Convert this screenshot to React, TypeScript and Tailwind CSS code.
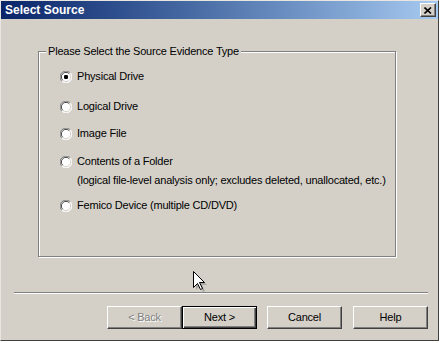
import React from 'react';

const font = { fontFamily: '"Liberation Sans", Arial, sans-serif' };

const Radio = ({ checked }: { checked?: boolean }) => (
  <svg width="12" height="12" viewBox="0 0 12 12" className="shrink-0">
    <circle cx="6" cy="6" r="5.5" fill="#fff" />
    {/* sunken edge: dark top-left, light bottom-right */}
    <path d="M10.2 1.8 A5.5 5.5 0 0 0 1.8 10.2" fill="none" stroke="#808080" strokeWidth="1" />
    <path d="M9.3 2.7 A4.5 4.5 0 0 0 2.7 9.3" fill="none" stroke="#404040" strokeWidth="1" />
    <path d="M1.8 10.2 A5.5 5.5 0 0 0 10.2 1.8" fill="none" stroke="#ffffff" strokeWidth="1" />
    <path d="M2.7 9.3 A4.5 4.5 0 0 0 9.3 2.7" fill="none" stroke="#d4d0c8" strokeWidth="1" />
    {checked && <rect x="4" y="4" width="4" height="4" rx="1.2" fill="#000" />}
  </svg>
);

const Option = ({ label, checked, className }: { label: string; checked?: boolean; className: string }) => (
  <div className={`flex items-center h-[13px] ${className}`}>
    <Radio checked={checked} />
    <span className="ml-[5px] text-[11px] tracking-[-0.2px] leading-none text-black whitespace-nowrap">{label}</span>
  </div>
);

const Button = ({ children, disabled, primary, className = '' }: { children: React.ReactNode; disabled?: boolean; primary?: boolean; className?: string }) => (
  <button
    className={`w-[75px] h-[23px] flex items-center justify-center text-[11px] tracking-[-0.2px] bg-[#d4d0c8] ${
      primary
        ? 'border border-black shadow-[inset_1px_1px_0_#fff,inset_-1px_-1px_0_#404040,inset_-2px_-2px_0_#808080]'
        : 'border border-t-white border-l-white border-r-[#404040] border-b-[#404040] shadow-[inset_-1px_-1px_0_#808080]'
    } ${disabled ? 'text-[#808080] [text-shadow:1px_1px_0_#fff]' : 'text-black'} ${className}`}
  >
    {children}
  </button>
);

const App = () => {
  return (
    <div className="relative w-[442px] h-[343px] bg-white overflow-hidden" style={font}>
      {/* Окно диалога */}
      <div className="w-[439px] h-[341px] bg-[#d4d0c8] border-l border-t border-[#e8e6e1] border-r border-b border-r-[#404040] border-b-[#404040] flex flex-col">
        {/* Заголовок */}
        <div className="h-[18px] bg-gradient-to-r from-[#0a246a] to-[#a6caf0] flex items-center justify-between pl-[4px] pr-[2px]">
          <span className="text-white font-bold text-[12px] leading-none">Select Source</span>
          <div className="w-[16px] h-[14px] bg-[#d4d0c8] border border-t-white border-l-white border-r-[#404040] border-b-[#404040] shadow-[inset_-1px_-1px_0_#808080] flex items-center justify-center">
            <svg width="8" height="7" viewBox="0 0 8 7">
              <path d="M0.5 0.5 L7 6.5 M7 0.5 L0.5 6.5" stroke="#000" strokeWidth="1.6" />
            </svg>
          </div>
        </div>

        {/* Группа выбора */}
        <div className="relative ml-[37px] mt-[32px] w-[358px] h-[206px] border border-[#808080] shadow-[inset_1px_1px_0_#fff,1px_1px_0_#fff]">
          <span className="absolute left-[7px] -top-[7px] px-[2px] bg-[#d4d0c8] text-[11px] tracking-[-0.2px] leading-[13px] text-black whitespace-nowrap">
            Please Select the Source Evidence Type
          </span>
          <div className="flex flex-col pl-[21px]">
            <Option className="mt-[18px]" label="Physical Drive" checked />
            <Option className="mt-[17px]" label="Logical Drive" />
            <Option className="mt-[14px]" label="Image File" />
            <Option className="mt-[15px]" label="Contents of a Folder" />
            <div className="mt-[6px] ml-[17px] h-[13px] text-[11px] tracking-[-0.2px] leading-[13px] text-black whitespace-nowrap">
              (logical file-level analysis only; excludes deleted, unallocated, etc.)
            </div>
            <Option className="mt-[12px]" label="Femico Device (multiple CD/DVD)" />
          </div>
        </div>

        {/* Разделитель */}
        <div className="ml-[13px] mt-[35px] w-[414px] h-[2px] border-t border-[#808080] border-b border-b-white" />

        {/* Кнопки */}
        <div className="flex mt-[12px] ml-[106px]">
          <Button disabled>&lt; Back</Button>
          <Button primary>Next &gt;</Button>
          <Button className="ml-[10px]">Cancel</Button>
          <Button className="ml-[11px]">Help</Button>
        </div>
      </div>

      {/* Курсор мыши */}
      <svg className="absolute left-[193px] top-[271px]" width="14" height="22" viewBox="0 0 14 22">
        <path d="M1.5 1.5 L1.5 17.5 L5.5 13.5 L8.5 19.5 L10.5 18.5 L7.5 12.5 L12.5 12.5 Z" fill="#808080" opacity="0.5" transform="translate(1.5,1.5)" />
        <path d="M0.5 0.5 L0.5 16.5 L4.5 12.5 L7.5 18.5 L9.5 17.5 L6.5 11.5 L11.5 11.5 Z" fill="#fff" stroke="#000" strokeWidth="1" />
      </svg>
    </div>
  );
};

export default App;
